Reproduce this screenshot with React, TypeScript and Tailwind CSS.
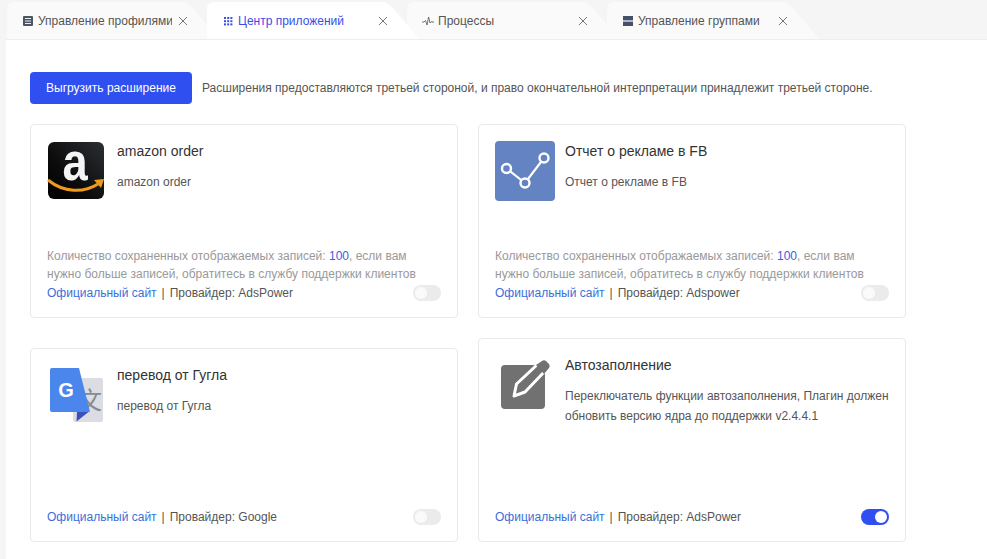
import React from 'react';

const ProfileIcon = () => (
  <svg width="10" height="10" viewBox="0 0 10 10" className="shrink-0">
    <rect width="10" height="10" rx="1" fill="#4b5563" />
    <path d="M2 2.500h6M2 5h6M2 7.500h6" stroke="#fff" strokeWidth="0.9" />
  </svg>
);

const GridIcon = () => (
  <svg width="9" height="9" viewBox="0 0 9 9" className="shrink-0" fill="#3b4de8">
    {[0, 3.2, 6.4].map((y) =>
      [0, 3.2, 6.4].map((x) => <rect key={`${x}-${y}`} x={x} y={y} width="2" height="2" />)
    )}
  </svg>
);

const PulseIcon = () => (
  <svg width="12" height="10" viewBox="0 0 12 10" className="shrink-0" fill="none">
    <path d="M0 6h2l1.500-1.500L5 9l1.600-8L8 7l1-1.200h1" stroke="#555" strokeWidth="0.8" />
    <circle cx="11" cy="6" r="0.8" fill="#555" />
  </svg>
);

const GroupIcon = () => (
  <svg width="10" height="10" viewBox="0 0 10 10" className="shrink-0" fill="#475069">
    <rect width="10" height="4.400" />
    <rect y="5.600" width="10" height="4.400" />
  </svg>
);

const AmazonLogo = () => (
  <svg width="60" height="60" viewBox="0 0 60 60" className="shrink-0 overflow-visible">
    <defs>
      <linearGradient id="amz" x1="1" y1="0" x2="0" y2="1">
        <stop offset="0" stopColor="#2b2e33" />
        <stop offset="0.6" stopColor="#0c0c0c" />
        <stop offset="1" stopColor="#000" />
      </linearGradient>
    </defs>
    <rect x="1" y="1" width="56" height="57" rx="6" fill="url(#amz)" />
    <text transform="translate(28 39) scale(0.84 1)" textAnchor="middle" fontFamily="Liberation Sans, sans-serif" fontWeight="700" fontSize="54" fill="#f4f4f4">
      a
    </text>
    <path d="M1 39c16 13 36 13 50 4" fill="none" stroke="#f09a1d" strokeWidth="3" />
    <path d="M47 39l10-1-3 9z" fill="#f09a1d" />
  </svg>
);

const ReportLogo = () => (
  <svg width="60" height="60" viewBox="0 0 60 60" className="shrink-0">
    <rect width="60" height="60" rx="4" fill="#6483c3" />
    <path d="M11.500 27.500L30 42L49 17" fill="none" stroke="#fff" strokeWidth="2.200" />
    <circle cx="11.500" cy="27.500" r="4.500" fill="#6483c3" stroke="#fff" strokeWidth="2.400" />
    <circle cx="30" cy="42" r="4.500" fill="#6483c3" stroke="#fff" strokeWidth="2.400" />
    <circle cx="49" cy="17" r="4.500" fill="#6483c3" stroke="#fff" strokeWidth="2.400" />
  </svg>
);

const TranslateLogo = () => (
  <svg width="60" height="60" viewBox="0 0 60 60" className="shrink-0 overflow-visible">
    <rect x="26" y="13" width="30" height="44" rx="2" fill="#dcdde2" />
    <text x="43" y="44" textAnchor="middle" fontFamily="Noto Sans CJK SC, sans-serif" fontSize="24" fill="#858a93">
      文
    </text>
    <path d="M5 3h27l11 44h-38q-2 0-2-2v-40q0-2 2-2z" fill="#4a86ec" />
    <path d="M30 47l-0.500 9.500 12-9.500z" fill="#3d4fb8" />
    <text x="19" y="32" textAnchor="middle" fontFamily="Liberation Sans, sans-serif" fontWeight="700" fontSize="20" fill="#fff">
      G
    </text>
  </svg>
);

const EditLogo = () => (
  <svg width="60" height="60" viewBox="0 0 60 60" className="shrink-0">
    <rect x="6" y="10" width="44" height="44" rx="4" fill="#717171" />
    <path d="M19 41l2.500-12L44 8l7 7-21 22z" fill="#717171" stroke="#fff" strokeWidth="3" strokeLinejoin="round" />
    <path d="M41 10l6-4q2-1.500 4 0l3 3q1.500 2 0 4l-5 6z" fill="#717171" />
  </svg>
);

const Toggle = ({ on = false }: { on?: boolean }) => (
  <div className={`flex h-4 w-7 rounded-full p-0.5 ${on ? 'justify-end bg-[#2f4ff0]' : 'bg-[#ebebeb]'}`}>
    <div className={`h-3 w-3 rounded-full ${on ? 'bg-white' : 'bg-[#fafafa]'}`} />
  </div>
);

const tabs = [
  { label: 'Управление профилями', icon: <ProfileIcon /> },
  { label: 'Центр приложений', icon: <GridIcon />, active: true },
  { label: 'Процессы', icon: <PulseIcon /> },
  { label: 'Управление группами', icon: <GroupIcon /> },
];

const cards = [
  {
    title: 'amazon order',
    desc: 'amazon order',
    logo: <AmazonLogo />,
    provider: 'AdsPower',
    note: true,
    height: 'h-[194px]',
  },
  {
    title: 'Отчет о рекламе в FB',
    desc: 'Отчет о рекламе в FB',
    logo: <ReportLogo />,
    provider: 'Adspower',
    note: true,
    height: 'h-[194px]',
  },
  {
    title: 'перевод от Гугла',
    desc: 'перевод от Гугла',
    logo: <TranslateLogo />,
    provider: 'Google',
    height: 'h-[194px]',
  },
  {
    title: 'Автозаполнение',
    desc: 'Переключатель функции автозаполнения, Плагин должен обновить версию ядра до поддержки v2.4.4.1',
    logo: <EditLogo />,
    provider: 'AdsPower',
    on: true,
    height: 'h-[204px]',
  },
];

export default function App() {
  return (
    <div className="flex h-[559px] w-[987px] flex-col overflow-hidden bg-[#f5f5f5] font-['Liberation_Sans',Arial,sans-serif] text-xs">
      {/* Tabs */}
      <div className="z-10 flex h-[39px] items-end pl-[7px]">
        {tabs.map((tab) => (
          <div
            key={tab.label}
            className={`relative -mr-[12px] flex h-[37px] w-[212px] items-center pl-4 pt-px rounded-tl-md [clip-path:polygon(0_0,178px_0,186px_6px,212px_100%,0_100%)] ${
              tab.active ? 'z-10 bg-white text-[#3b4de8]' : 'bg-[#fafafa] text-[#555]'
            }`}
          >
            <div className="flex w-[149px] min-w-0 items-center gap-[5px]">
              <div className="flex w-[10px] shrink-0 justify-center">{tab.icon}</div>
              <span className="overflow-hidden whitespace-nowrap">{tab.label}</span>
            </div>
            <svg width="10" height="10" viewBox="0 0 10 10" className="ml-[6px] shrink-0" stroke="#777" strokeWidth="1">
              <path d="M1 1l8 8M9 1l-8 8" />
            </svg>
          </div>
        ))}
      </div>

      {/* Content */}
      <div className="ml-[6px] flex-1 border-t border-[#eeeeee] bg-white pl-6 pt-[32px]">
        <div className="flex items-center gap-[10px]">
          <button className="h-8 w-[162px] rounded bg-[#2f4ff0] font-medium text-white">Выгрузить расширение</button>
          <span className="text-[#555]">
            Расширения предоставляются третьей стороной, и право окончательной интерпретации принадлежит третьей стороне.
          </span>
        </div>

        <div className="mt-5 grid w-[876px] grid-cols-2 items-end gap-x-5 gap-y-5">
          {cards.map((card) => (
            <div key={card.title} className={`flex flex-col rounded border border-[#e8e8e8] px-4 pb-4 pt-4 ${card.height}`}>
              <div className="flex gap-[10px]">
                {card.logo}
                <div className="min-w-0">
                  <div className="text-sm leading-5 text-[#333]">{card.title}</div>
                  <div className="mt-[11px] leading-5 text-[#555]">{card.desc}</div>
                </div>
              </div>

              <div className="mt-auto">
                {card.note && (
                  <div className="leading-[18px] text-[#999]">
                    Количество сохраненных отображаемых записей: <span className="text-[#3b5ce8]">100</span>, если вам
                    <br />
                    нужно больше записей, обратитесь в службу поддержки клиентов
                  </div>
                )}
                <div className="flex h-[18px] items-center justify-between pt-[2px]">
                  <div className="flex items-center text-[#555]">
                    <span className="text-[#3b6fd8]">Официальный сайт</span>
                    <span className="mx-[5px]">|</span>
                    <span>Провайдер: {card.provider}</span>
                  </div>
                  <Toggle on={card.on} />
                </div>
              </div>
            </div>
          ))}
        </div>
      </div>
    </div>
  );
}
